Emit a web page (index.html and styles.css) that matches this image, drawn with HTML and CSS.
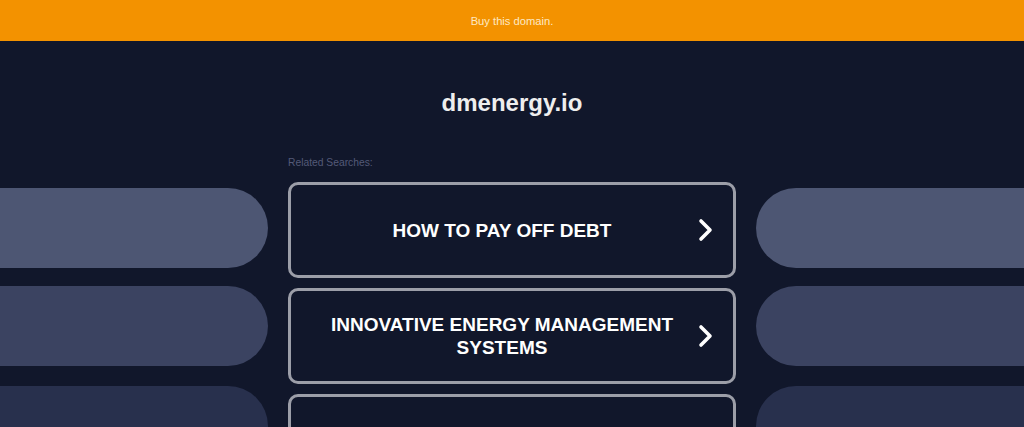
FILE: index.html
```html
<!DOCTYPE html>
<html lang="en">
<head>
<meta charset="utf-8">
<title>dmenergy.io</title>
<link rel="stylesheet" href="styles.css">
</head>
<body>
<div class="topbar">Buy this domain.</div>
<h1 class="domain">dmenergy.io</h1>
<div class="layout">
  <div class="side side-left">
    <div class="pill pill-1"></div>
    <div class="pill pill-2"></div>
    <div class="pill pill-3"></div>
  </div>
  <div class="center">
    <div class="label">Related Searches:</div>
    <div class="boxes">
      <a class="box" href="#">
        <span class="box-text">HOW TO PAY OFF DEBT</span>
        <svg class="chev" width="20" height="24" viewBox="0 0 20 24"><polyline points="5,3 14,12 5,21" fill="none" stroke="#ffffff" stroke-width="3.6" stroke-linecap="round" stroke-linejoin="round"/></svg>
      </a>
      <a class="box" href="#">
        <span class="box-text">INNOVATIVE ENERGY MANAGEMENT SYSTEMS</span>
        <svg class="chev" width="20" height="24" viewBox="0 0 20 24"><polyline points="5,3 14,12 5,21" fill="none" stroke="#ffffff" stroke-width="3.6" stroke-linecap="round" stroke-linejoin="round"/></svg>
      </a>
      <a class="box" href="#">
        <span class="box-text"></span>
      </a>
    </div>
  </div>
  <div class="side side-right">
    <div class="pill pill-1"></div>
    <div class="pill pill-2"></div>
    <div class="pill pill-3"></div>
  </div>
</div>
</body>
</html>
```
FILE: styles.css
```css
html, body {
  margin: 0;
  padding: 0;
}
body {
  background: #11172b;
  font-family: "Liberation Sans", Arial, sans-serif;
  height: 427px;
  overflow: hidden;
}
.topbar {
  height: 41px;
  background: #f39200;
  color: #fde9c4;
  font-size: 11.2px;
  display: flex;
  align-items: center;
  justify-content: center;
}
.domain {
  margin: 0;
  padding-top: 48px;
  font-size: 24px;
  line-height: 28px;
  font-weight: bold;
  color: #eeeeee;
  text-align: center;
}
.layout {
  display: grid;
  grid-template-columns: 268px 448px 268px;
  column-gap: 20px;
  margin-top: 40px;
}
.side {
  display: flex;
  flex-direction: column;
  gap: 18px;
  padding-top: 31px;
}
.pill {
  height: 80px;
}
.side-left .pill {
  border-radius: 0 40px 40px 0;
}
.side-right .pill {
  border-radius: 40px 0 0 40px;
}
.pill-1 { background: #4d5673; }
.pill-2 { background: #3b4361; }
.pill-3 { background: #28304d; margin-top: 2px; }
.label {
  font-size: 10.3px;
  line-height: 12px;
  color: #545a78;
}
.boxes {
  margin-top: 13px;
  display: flex;
  flex-direction: column;
  gap: 10px;
}
.box {
  box-sizing: border-box;
  height: 96px;
  border: 3px solid #9c9ea8;
  border-radius: 10px;
  display: flex;
  align-items: center;
  padding: 0 17px;
  text-decoration: none;
  color: #ffffff;
}
.box-text {
  flex: 1;
  text-align: center;
  font-size: 19px;
  line-height: 23px;
  font-weight: bold;
}
.chev {
  flex: none;
  display: block;
}
```
